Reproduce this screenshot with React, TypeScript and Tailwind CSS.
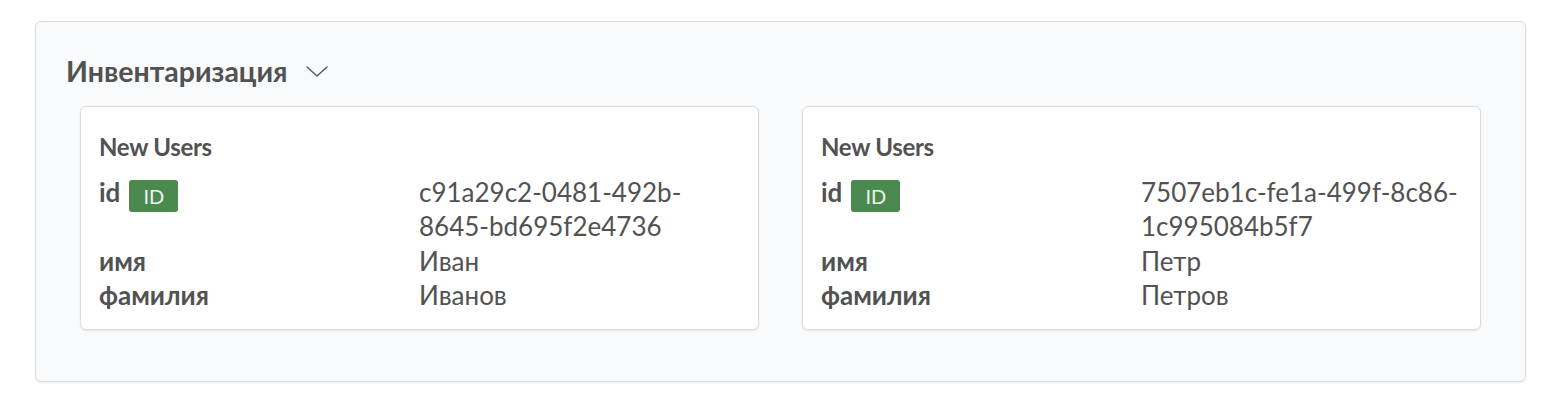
import React from "react";

type User = { id: string; first: string; last: string };

const users: User[] = [
  { id: "c91a29c2-0481-492b-8645-bd695f2e4736", first: "Иван", last: "Иванов" },
  { id: "7507eb1c-fe1a-499f-8c86-1c995084b5f7", first: "Петр", last: "Петров" },
];

function Breakable({ text }: { text: string }) {
  const parts = text.split("-");
  return (
    <>
      {parts.map((p, i) => (
        <React.Fragment key={i}>
          {p}
          {i < parts.length - 1 ? (
            <>
              -<wbr />
            </>
          ) : null}
        </React.Fragment>
      ))}
    </>
  );
}

function Card({ user }: { user: User }) {
  return (
    <div className="rounded-[6px] border border-[#dcdde1] bg-white pl-[18px] pr-[19px] pt-[25px] pb-[17px] shadow-[0_1px_2px_rgba(0,0,0,0.08)]">
      <div className="text-[24px] font-bold leading-[30px] tracking-[-0.3px] text-[#525252]">New Users</div>
      <div className="mt-[13px] grid grid-cols-2 text-[26px] leading-[34.3px] text-[#525252]">
        <div className="flex items-start gap-[9px] font-bold">
          <span>id</span>
          <span className="mt-[5px] inline-flex h-[32px] w-[49px] items-center justify-center rounded-[3px] bg-[#4b8a4e] text-[20px] font-normal leading-none text-[#eef5ee]">
            ID
          </span>
        </div>
        <div className="break-words">
          <Breakable text={user.id} />
        </div>
        <div className="font-bold">имя</div>
        <div>{user.first}</div>
        <div className="font-bold">фамилия</div>
        <div>{user.last}</div>
      </div>
    </div>
  );
}

export default function App() {
  return (
    <div
      className="min-h-[404px] bg-white pl-[35px] pt-[21px]"
      style={{ fontFamily: "Lato, 'Open Sans', sans-serif" }}
    >
      <div className="w-[1491px] rounded-[6px] border border-[#dcdde1] bg-[#f9fafc] pb-[51px] pt-[32px] shadow-[0_1px_2px_rgba(0,0,0,0.08)]">
        <div className="flex items-center gap-[18px] pl-[30px]">
          <h2 className="text-[28.5px] font-bold leading-[34px] text-[#525252]">Инвентаризация</h2>
          <svg width="22" height="11" viewBox="0 0 22 11" fill="none" className="mt-[1px]">
            <path d="M1 1l10 9 10-9" stroke="#555555" strokeWidth="1.4" strokeLinecap="round" strokeLinejoin="round" />
          </svg>
        </div>
        <div className="mt-[18px] grid grid-cols-2 gap-[43px] px-[44px]">
          {users.map((u) => (
            <Card key={u.id} user={u} />
          ))}
        </div>
      </div>
    </div>
  );
}
